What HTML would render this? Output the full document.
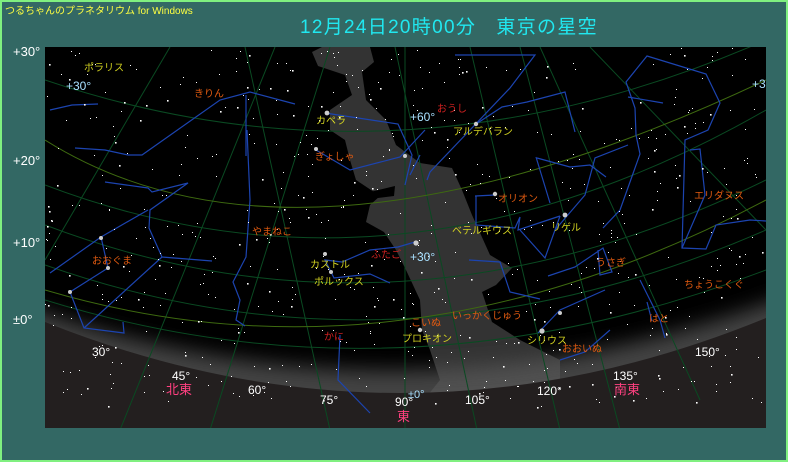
<!DOCTYPE html>
<html><head><meta charset="utf-8"><style>
html,body{margin:0;padding:0}
body{width:788px;height:462px;background:#336864;position:relative;overflow:hidden;font-family:"Liberation Sans","Noto Sans CJK JP",sans-serif}
#frame{position:absolute;left:0;top:0;width:784px;height:458px;border:2px solid #80f080}
.t{position:absolute;white-space:nowrap}
</style></head><body>
<div id="frame"></div>
<div class="t" style="left:5px;top:2px;color:#ffff40;font-size:10px">つるちゃんのプラネタリウム for Windows</div>
<div class="t" style="left:300px;top:12px;color:#20e8f0;font-size:19px;letter-spacing:1.3px">12月24日20時00分　東京の星空</div>
<div class="t" style="left:13px;top:44px;color:#fff;font-size:13px">+30°</div>
<div class="t" style="left:13px;top:153px;color:#fff;font-size:13px">+20°</div>
<div class="t" style="left:13px;top:235px;color:#fff;font-size:13px">+10°</div>
<div class="t" style="left:13px;top:312px;color:#fff;font-size:13px">±0°</div>
<svg style="position:absolute;left:45px;top:47px" width="721" height="381" viewBox="45 47 721 381" id="sky">
<defs><filter id="b"><feGaussianBlur stdDeviation="10"/></filter>
<clipPath id="c"><rect x="45" y="47" width="721" height="381"/></clipPath></defs>
<rect x="45" y="47" width="721" height="381" fill="#000"/>
<path fill="#333" d="M312,52 L322,47 L370,47 L374,62 L362,72 L366,100 L386,120 L396,145 L420,163 L452,168 L462,190 L472,215 L490,255 L512,268 L496,285 L482,292 L492,322 L520,340 L560,360 L560,430 L400,430 L440,380 L430,350 L422,330 L420,300 L406,270 L396,250 L384,232 L366,222 L370,205 L380,196 L356,180 L350,160 L345,140 L330,130 L330,110 L352,95 L345,75 L318,66 Z"/>
<path fill="#000" d="M370,192 L395,186 L394,196 L378,198 Z"/>
<g clip-path="url(#c)">
<path fill="#5a5a5a" opacity="0.75" filter="url(#b)" d="M20,305 Q405,440 790,295 L790,450 L20,450 Z"/>
</g>
<path fill="#231f1f" d="M45,322 Q405,466 766,318 L766,428 L45,428 Z"/>
<g fill="none" stroke="#0a4a22" stroke-width="1">
<path d="M45,80 Q400,200 766,40"/>
<path d="M45,185 Q400,320 766,110"/>
<path d="M45,225 Q400,360 766,180"/>
<path d="M45,265 Q400,390 766,230"/>
<path d="M45,300 Q400,410 766,270"/>
<path d="M120,430 L275,47"/><path d="M210,430 L330,47"/>
<path d="M330,430 L245,47"/><path d="M405,430 L405,47"/><path d="M477,430 L395,47"/>
<path d="M560,430 L470,47"/><path d="M620,430 L520,47"/><path d="M700,400 L540,47"/>
<path d="M766,230 L590,47"/><path d="M45,260 L170,47"/>
</g>
<g fill="none" stroke="#3e6a10" stroke-width="1">
<path d="M45,140 Q300,300 766,80"/>
<path d="M45,290 Q400,395 766,200"/>
</g>
<g fill="none" stroke="#1c44b0" stroke-width="1.2">
<path d="M50,110 L72,105 L98,104"/><path d="M75,148 L105,150 L128,155 L142,155 L220,100 L250,92 L295,104"/>
<path d="M246,95 L246,156"/>
<path d="M105,182 L148,188 L152,192 L188,183 L150,210 L149,228 L162,257 L212,261"/>
<path d="M50,273 L101,237 L108,268 L70,292 L84,328 L124,333 L123,322"/>
<path d="M101,237 L148,210"/><path d="M84,328 L162,257"/>
<path d="M247,130 L250,200 L246,257 L233,282 L240,300 L236,320 L245,326"/>
<path d="M325,113 L398,124 L412,155 L405,185"/><path d="M316,150 L350,170 L400,157 L425,130"/>
<path d="M415,242 L398,247 L370,250 L342,262 L325,260 L334,278 L370,274 L390,283"/>
<path d="M420,155 L410,175"/>
<path d="M455,55 L535,55 L510,88 L470,130 L430,172 L427,180"/>
<path d="M476,124 L502,107 L527,102 L565,92 L575,132"/>
<path d="M537,158 L570,167 L590,165 L606,177"/><path d="M536,157 L550,203"/>
<path d="M475,196 L495,195 L476,196 L476,225 L515,228 L520,217 L518,230 L560,216"/>
<path d="M520,230 L545,258 L560,216"/><path d="M555,230 L585,195 L595,158 L628,145"/>
<path d="M469,260 L500,262 L510,292 L540,299"/>
<path d="M598,250 L600,275 L612,272 L603,248 L575,267 L548,276"/>
<path d="M603,228 L620,210 L640,154 L636,135 L635,108 L626,82 L647,56 L706,74 L720,103 L708,130 L685,140 L682,248 L706,249 L716,225 L750,220 L766,221"/>
<path d="M690,150 L700,149 L705,195 L682,248"/>
<path d="M663,103 L628,97"/>
<path d="M640,280 L660,320 L665,338"/><path d="M647,302 L652,321"/>
<path d="M560,360 L585,352 L610,330"/><path d="M340,335 L338,380 L370,413"/>
<path d="M538,333 L560,310 L605,290"/>
</g>
<g id="stars" fill="#fff"></g>
<g fill="#ccc">
<circle cx="416" cy="243" r="2.6"/><circle cx="327" cy="113" r="2.4"/><circle cx="316" cy="149" r="2"/>
<circle cx="542" cy="331" r="2.6"/><circle cx="420" cy="330" r="2.2"/><circle cx="565" cy="215" r="2.4"/>
<circle cx="495" cy="194" r="2.2"/><circle cx="476" cy="124" r="2.2"/><circle cx="108" cy="268" r="2"/>
<circle cx="101" cy="238" r="2"/><circle cx="70" cy="292" r="2"/><circle cx="331" cy="272" r="2"/><circle cx="325" cy="254" r="2"/>
<circle cx="560" cy="313" r="2"/><circle cx="405" cy="156" r="2"/>
</g>
<g font-size="10" font-family="Liberation Sans,Noto Sans CJK JP,sans-serif">
<text x="84" y="71" fill="#d0d020">ポラリス</text>
<text x="194" y="97" fill="#e05a10">きりん</text>
<text x="316" y="124" fill="#d0d020">カペラ</text>
<text x="315" y="160" fill="#e05a10">ぎょしゃ</text>
<text x="437" y="112" fill="#d02020">おうし</text>
<text x="453" y="135" fill="#d0d020">アルデバラン</text>
<text x="498" y="202" fill="#e05a10">オリオン</text>
<text x="452" y="234" fill="#d0d020">ベテルギウス</text>
<text x="551" y="231" fill="#d0d020">リゲル</text>
<text x="694" y="199" fill="#e05a10">エリダヌス</text>
<text x="252" y="235" fill="#e05a10">やまねこ</text>
<text x="92" y="264" fill="#e05a10">おおぐま</text>
<text x="310" y="268" fill="#d0d020">カストル</text>
<text x="314" y="285" fill="#d0d020">ポルックス</text>
<text x="371" y="258" fill="#d02020">ふたご</text>
<text x="596" y="266" fill="#e05a10">うさぎ</text>
<text x="684" y="288" fill="#e05a10">ちょうこくぐ</text>
<text x="649" y="322" fill="#e05a10">はと</text>
<text x="452" y="319" fill="#e05a10">いっかくじゅう</text>
<text x="411" y="326" fill="#e05a10">こいぬ</text>
<text x="402" y="342" fill="#d0d020">プロキオン</text>
<text x="527" y="344" fill="#d0d020">シリウス</text>
<text x="562" y="352" fill="#e05a10">おおいぬ</text>
<text x="324" y="340" fill="#d02020">かに</text>
</g>
<g font-size="12" fill="#a8e0ff">
<text x="66" y="90">+30°</text><text x="410" y="121">+60°</text><text x="410" y="261">+30°</text><text x="408" y="398" font-size="11">±0°</text><text x="752" y="88">+3</text>
</g>
<g font-size="12" fill="#fff">
<text x="92" y="356">30°</text><text x="172" y="380">45°</text><text x="248" y="394">60°</text>
<text x="320" y="404">75°</text><text x="395" y="406">90°</text><text x="465" y="404">105°</text>
<text x="537" y="395">120°</text><text x="613" y="380">135°</text><text x="695" y="356">150°</text>
</g>
<g font-size="13" fill="#ff4080">
<text x="166" y="394">北東</text><text x="614" y="394">南東</text><text x="397" y="421">東</text>
</g>
</svg>
<script>
var s=12345;function r(){s=(s*16807)%2147483647;return s/2147483647;}
var g=document.getElementById('stars'),h='';
for(var i=0;i<650;i++){var x=45+r()*721,y=47+r()*360;var sz=r()<0.85?1:1.6;h+='<rect x="'+x.toFixed(0)+'" y="'+y.toFixed(0)+'" width="'+sz+'" height="'+sz+'"/>';}
g.innerHTML=h;
</script>
</body></html>
